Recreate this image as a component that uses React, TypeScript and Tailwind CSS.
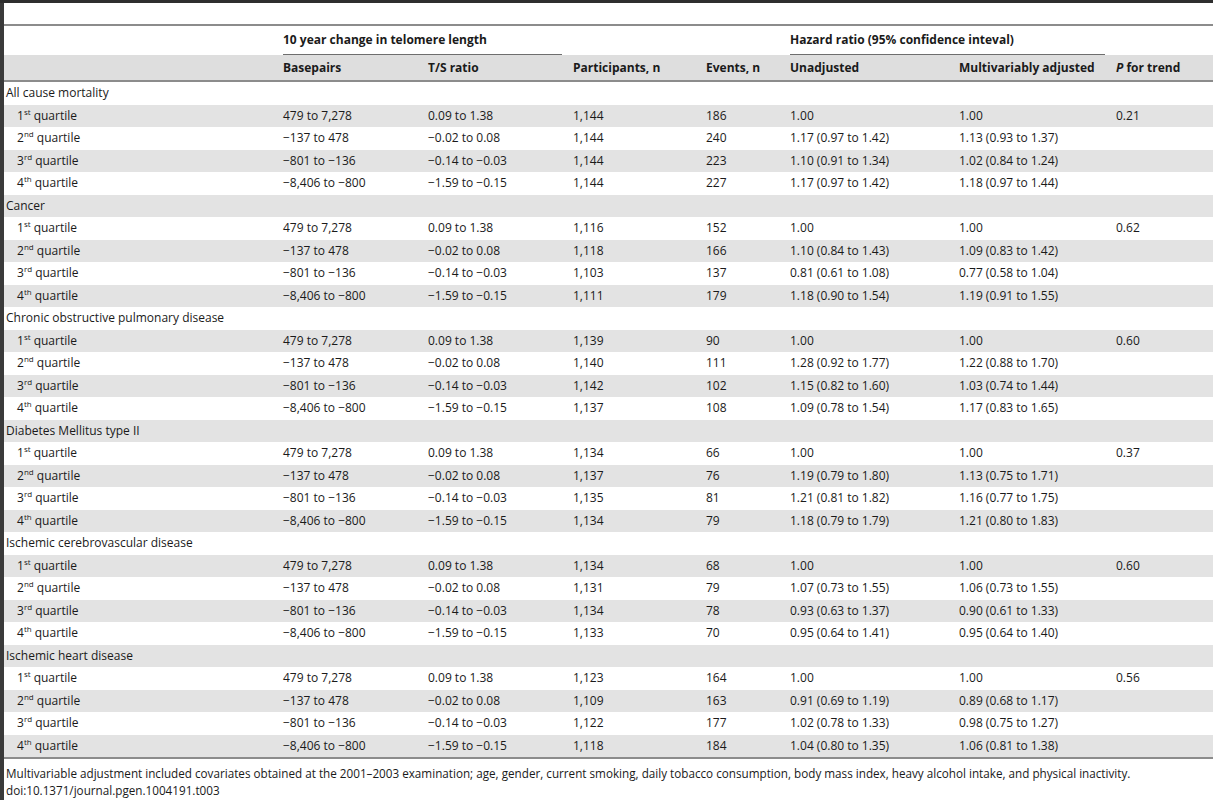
import React from "react";

const M = "\u2212";

const ranges = [
  [`479 to 7,278`, `0.09 to 1.38`],
  [`${M}137 to 478`, `${M}0.02 to 0.08`],
  [`${M}801 to ${M}136`, `${M}0.14 to ${M}0.03`],
  [`${M}8,406 to ${M}800`, `${M}1.59 to ${M}0.15`],
];

const groups: { title: string; rows: string[][]; p: string }[] = [
  {
    title: "All cause mortality",
    p: "0.21",
    rows: [
      ["1,144", "186", "1.00", "1.00"],
      ["1,144", "240", "1.17 (0.97 to 1.42)", "1.13 (0.93 to 1.37)"],
      ["1,144", "223", "1.10 (0.91 to 1.34)", "1.02 (0.84 to 1.24)"],
      ["1,144", "227", "1.17 (0.97 to 1.42)", "1.18 (0.97 to 1.44)"],
    ],
  },
  {
    title: "Cancer",
    p: "0.62",
    rows: [
      ["1,116", "152", "1.00", "1.00"],
      ["1,118", "166", "1.10 (0.84 to 1.43)", "1.09 (0.83 to 1.42)"],
      ["1,103", "137", "0.81 (0.61 to 1.08)", "0.77 (0.58 to 1.04)"],
      ["1,111", "179", "1.18 (0.90 to 1.54)", "1.19 (0.91 to 1.55)"],
    ],
  },
  {
    title: "Chronic obstructive pulmonary disease",
    p: "0.60",
    rows: [
      ["1,139", "90", "1.00", "1.00"],
      ["1,140", "111", "1.28 (0.92 to 1.77)", "1.22 (0.88 to 1.70)"],
      ["1,142", "102", "1.15 (0.82 to 1.60)", "1.03 (0.74 to 1.44)"],
      ["1,137", "108", "1.09 (0.78 to 1.54)", "1.17 (0.83 to 1.65)"],
    ],
  },
  {
    title: "Diabetes Mellitus type II",
    p: "0.37",
    rows: [
      ["1,134", "66", "1.00", "1.00"],
      ["1,137", "76", "1.19 (0.79 to 1.80)", "1.13 (0.75 to 1.71)"],
      ["1,135", "81", "1.21 (0.81 to 1.82)", "1.16 (0.77 to 1.75)"],
      ["1,134", "79", "1.18 (0.79 to 1.79)", "1.21 (0.80 to 1.83)"],
    ],
  },
  {
    title: "Ischemic cerebrovascular disease",
    p: "0.60",
    rows: [
      ["1,134", "68", "1.00", "1.00"],
      ["1,131", "79", "1.07 (0.73 to 1.55)", "1.06 (0.73 to 1.55)"],
      ["1,134", "78", "0.93 (0.63 to 1.37)", "0.90 (0.61 to 1.33)"],
      ["1,133", "70", "0.95 (0.64 to 1.41)", "0.95 (0.64 to 1.40)"],
    ],
  },
  {
    title: "Ischemic heart disease",
    p: "0.56",
    rows: [
      ["1,123", "164", "1.00", "1.00"],
      ["1,109", "163", "0.91 (0.69 to 1.19)", "0.89 (0.68 to 1.17)"],
      ["1,122", "177", "1.02 (0.78 to 1.33)", "0.98 (0.75 to 1.27)"],
      ["1,118", "184", "1.04 (0.80 to 1.35)", "1.06 (0.81 to 1.38)"],
    ],
  },
];

const ords = ["st", "nd", "rd", "th"];

const cols =
  "grid grid-cols-[279px_145px_145px_133px_84px_169px_157px_1fr] items-center";

const App = () => {
  let idx = 0;
  const body: React.ReactNode[] = [];
  groups.forEach((g) => {
    const stripe = idx % 2 === 1;
    body.push(
      <div
        key={g.title}
        className={`${cols} h-[22.5px] ${stripe ? "bg-[#e3e3e3]" : "bg-white"}`}
      >
        <div className="pl-[2px] col-span-8">{g.title}</div>
      </div>
    );
    idx++;
    g.rows.forEach((r, i) => {
      const s = idx % 2 === 1;
      body.push(
        <div
          key={g.title + i}
          className={`${cols} h-[22.5px] ${s ? "bg-[#e3e3e3]" : "bg-white"}`}
        >
          <div className="pl-[13px]">
            {i + 1}
            <sup className="text-[8px] leading-none -top-[5px]">{ords[i]}</sup> quartile
          </div>
          <div>{ranges[i][0]}</div>
          <div>{ranges[i][1]}</div>
          <div>{r[0]}</div>
          <div>{r[1]}</div>
          <div>{r[2]}</div>
          <div>{r[3]}</div>
          <div>{i === 0 ? g.p : ""}</div>
        </div>
      );
      idx++;
    });
  });

  return (
    <main className="w-[1213px] h-[800px] bg-white border-t-[3px] border-[#2e2e2e] flex text-[12px] text-[#1a1a1a] font-['Open_Sans',sans-serif] overflow-hidden">
      <div className="w-[4px] bg-[#3a3a3a]" />
      <div className="flex-1 flex flex-col">
        <div className="h-[21px]" />
        <div className="border-t-[2px] border-[#8c8c8c]" />
        <div className={`${cols} h-[29px] font-bold`}>
          <div />
          <div className="col-span-2 h-full flex flex-col justify-center mr-[11px] border-b border-[#6e6e6e]">
            10 year change in telomere length
          </div>
          <div />
          <div />
          <div className="col-span-2 h-full flex flex-col justify-center mr-[11px] border-b border-[#6e6e6e]">
            Hazard ratio (95% confidence inteval)
          </div>
          <div />
        </div>
        <div className={`${cols} h-[27px] bg-[#dedede] font-bold border-b-[2px] border-[#8c8c8c]`}>
          <div />
          <div>Basepairs</div>
          <div>T/S ratio</div>
          <div>Participants, n</div>
          <div>Events, n</div>
          <div>Unadjusted</div>
          <div>Multivariably adjusted</div>
          <div>
            <span className="italic">P</span> for trend
          </div>
        </div>
        {body}
        <div className="border-t-[2px] border-[#8c8c8c]" />
        <div className="pl-[2px] pt-[6px] leading-[17px] text-[11.7px]">
          <p>
            Multivariable adjustment included covariates obtained at the 2001–2003 examination; age, gender, current
            smoking, daily tobacco consumption, body mass index, heavy alcohol intake, and physical inactivity.
          </p>
          <p>doi:10.1371/journal.pgen.1004191.t003</p>
        </div>
      </div>
    </main>
  );
};

export default App;
